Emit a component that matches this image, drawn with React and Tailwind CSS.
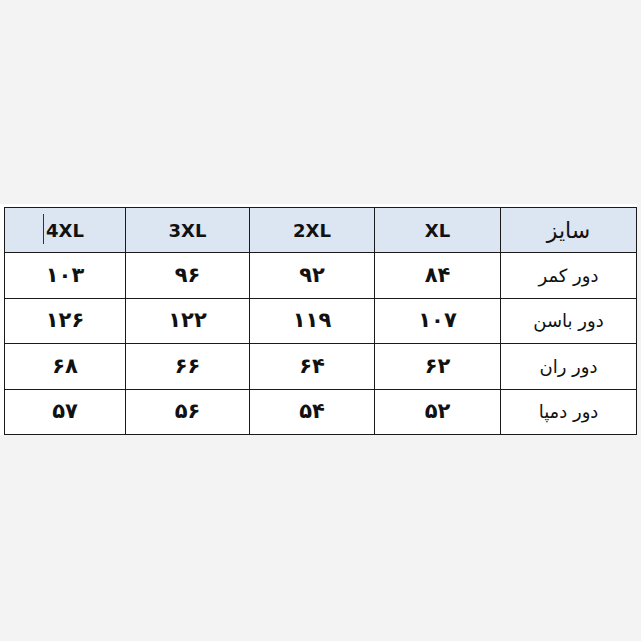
import React from 'react';

const sizes = ['XL', '2XL', '3XL', '4XL'];

const rows = [
  { label: 'دور کمر', values: ['۸۴', '۹۲', '۹۶', '۱۰۳'] },
  { label: 'دور باسن', values: ['۱۰۷', '۱۱۹', '۱۲۲', '۱۲۶'] },
  { label: 'دور ران', values: ['۶۲', '۶۴', '۶۶', '۶۸'] },
  { label: 'دور دمپا', values: ['۵۲', '۵۴', '۵۶', '۵۷'] },
];

const widths = ['w-[136px]', 'w-[126px]', 'w-[125px]', 'w-[124px]', 'w-[121px]'];

export default function App() {
  return (
    <div className="w-[641px] h-[641px] bg-[#f3f3f3] pt-[204px] font-['DejaVu_Sans',sans-serif] text-[#111]">
      <div className="w-[637px] h-[231px] bg-white pt-[3px] pl-[4px]">
        <table dir="rtl" className="table-fixed border-collapse w-[632px]">
          <colgroup>
            {widths.map((w, i) => (
              <col key={i} className={w} />
            ))}
          </colgroup>
          <thead>
            <tr className="h-[45px] bg-[#dce6f2]">
              <th className="border border-[#1a1a1a] text-[22px] font-normal text-center">سایز</th>
              {sizes.map((s, i) => (
                <th key={s} className="border border-[#1a1a1a] text-[18px] font-bold text-center">
                  <span className="relative">
                    {i === 3 && (
                      <span className="absolute left-[-3px] top-[-6px] h-[30px] w-px bg-[#333]" />
                    )}
                    {s}
                  </span>
                </th>
              ))}
            </tr>
          </thead>
          <tbody>
            {rows.map((r) => (
              <tr key={r.label} className="h-[45.5px]">
                <td className="border border-[#1a1a1a] text-[18px] text-center">{r.label}</td>
                {r.values.map((v, i) => (
                  <td key={i} className="border border-[#1a1a1a] text-[21px] font-bold text-center leading-none">
                    {v}
                  </td>
                ))}
              </tr>
            ))}
          </tbody>
        </table>
      </div>
    </div>
  );
}
